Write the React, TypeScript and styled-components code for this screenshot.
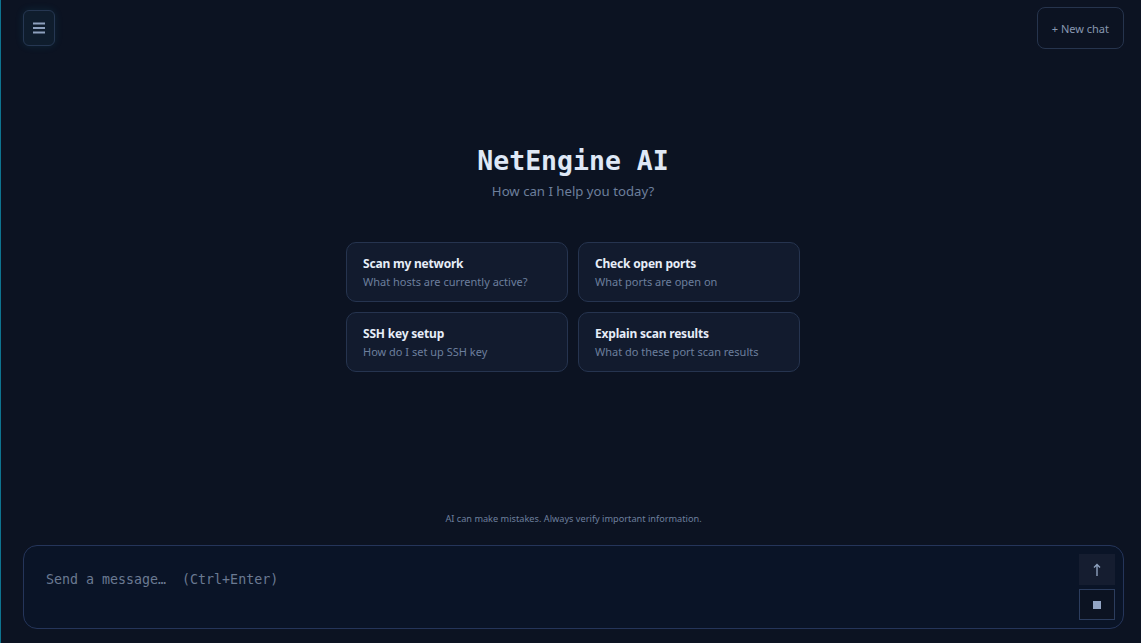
import styled, { createGlobalStyle } from 'styled-components';

const GlobalStyle = createGlobalStyle`
  html, body {
    margin: 0;
    padding: 0;
    height: 100%;
    background: #0c1322;
  }
  #root {
    height: 100%;
  }
  * {
    box-sizing: border-box;
  }
`;

const Shell = styled.div`
  height: 100vh;
  display: flex;
  flex-direction: column;
  background-color: #0c1322;
  border-left: 1px solid #0e7490;
  font-family: 'Noto Sans', 'Open Sans', sans-serif;
`;

const TopBar = styled.header`
  display: flex;
  justify-content: space-between;
  align-items: flex-start;
  padding: 7px 17px 0 22px;
`;

const MenuButton = styled.button`
  width: 32px;
  height: 36px;
  margin-top: 3px;
  display: flex;
  align-items: center;
  justify-content: center;
  background: #0f1d2d;
  border: 1px solid #263752;
  border-radius: 6px;
  box-shadow: 0 0 8px rgba(34, 170, 210, 0.12);
  cursor: pointer;
  padding: 0;
`;

const NewChatButton = styled.button`
  height: 42px;
  padding: 0 14px;
  background: transparent;
  border: 1px solid #26344d;
  border-radius: 8px;
  color: #8797b0;
  font-family: 'Noto Sans', 'Open Sans', sans-serif;
  font-size: 11px;
  cursor: pointer;
`;

const Main = styled.main`
  flex: 1;
  display: flex;
  flex-direction: column;
  align-items: center;
  padding-top: 95px;
  padding-left: 4px;
`;

const Title = styled.h1`
  margin: 0;
  font-family: 'DejaVu Sans Mono', 'Liberation Mono', monospace;
  font-size: 26.5px;
  font-weight: 700;
  color: #dfe8f6;
  line-height: 34px;
`;

const Subtitle = styled.p`
  margin: 3px 0 0;
  font-size: 13.2px;
  color: #6d7f9c;
  line-height: 20px;
`;

const Suggestions = styled.div`
  margin-top: 41px;
  display: grid;
  grid-template-columns: 222px 222px;
  gap: 10px 10px;
`;

const Card = styled.button`
  height: 60px;
  padding: 0 16px;
  display: flex;
  flex-direction: column;
  justify-content: center;
  align-items: flex-start;
  gap: 1px;
  text-align: left;
  background: #121b2e;
  border: 1px solid #26344f;
  border-radius: 10px;
  cursor: pointer;
`;

const CardTitle = styled.span`
  font-family: 'Noto Sans', 'Open Sans', sans-serif;
  font-size: 12px;
  font-weight: 700;
  letter-spacing: -0.2px;
  color: #e6edf8;
  line-height: 18px;
`;

const CardHint = styled.span`
  font-family: 'Noto Sans', 'Open Sans', sans-serif;
  font-size: 11px;
  color: #6c7f9d;
  line-height: 16px;
`;

const Footer = styled.footer`
  display: flex;
  flex-direction: column;
  align-items: center;
  padding: 0 17px 14px 22px;
`;

const Disclaimer = styled.p`
  margin: 0 0 19px;
  font-size: 9.2px;
  color: #6c7f9d;
  line-height: 14px;
`;

const Composer = styled.div`
  width: 100%;
  height: 84px;
  display: flex;
  align-items: stretch;
  background: #0a1427;
  border: 1px solid #25355a;
  border-radius: 14px;
  padding: 8px 8px 8px 22px;
`;

const Input = styled.textarea`
  flex: 1;
  resize: none;
  background: transparent;
  border: none;
  outline: none;
  padding: 0;
  margin-top: 17px;
  font-family: 'DejaVu Sans Mono', 'Liberation Mono', monospace;
  font-size: 13.3px;
  line-height: 18px;
  color: #c9d4e5;

  &::placeholder {
    color: #6a7a92;
  }
`;

const Actions = styled.div`
  display: flex;
  flex-direction: column;
  gap: 4px;
`;

const ActionButton = styled.button<{ $outlined?: boolean }>`
  width: 36px;
  height: 31px;
  display: flex;
  align-items: center;
  justify-content: center;
  padding: 0;
  background: ${(p) => (p.$outlined ? '#0c1322' : '#151d30')};
  border: 1px solid ${(p) => (p.$outlined ? '#2c3d5e' : '#151d30')};
  border-radius: 0;
  cursor: pointer;
`;

const suggestions = [
  { title: 'Scan my network', hint: 'What hosts are currently active?' },
  { title: 'Check open ports', hint: 'What ports are open on' },
  { title: 'SSH key setup', hint: 'How do I set up SSH key' },
  { title: 'Explain scan results', hint: 'What do these port scan results' },
];

const App = () => {
  return (
    <>
      <GlobalStyle />
      <Shell>
        <TopBar>
          <MenuButton aria-label="Menu">
            <svg width="12" height="12" viewBox="0 0 12 12">
              <rect x="0" y="0.5" width="12" height="2" fill="#8da0bd" />
              <rect x="0" y="5" width="12" height="2" fill="#8da0bd" />
              <rect x="0" y="9.5" width="12" height="2" fill="#8da0bd" />
            </svg>
          </MenuButton>
          <NewChatButton>+ New chat</NewChatButton>
        </TopBar>

        <Main>
          <Title>NetEngine AI</Title>
          <Subtitle>How can I help you today?</Subtitle>
          <Suggestions>
            {suggestions.map((s) => (
              <Card key={s.title}>
                <CardTitle>{s.title}</CardTitle>
                <CardHint>{s.hint}</CardHint>
              </Card>
            ))}
          </Suggestions>
        </Main>

        <Footer>
          <Disclaimer>AI can make mistakes. Always verify important information.</Disclaimer>
          <Composer>
            <Input placeholder="Send a message…  (Ctrl+Enter)" />
            <Actions>
              <ActionButton aria-label="Send">
                <svg width="8" height="14" viewBox="0 0 8 14">
                  <path d="M4 13V1.5M1 4.5L4 1.5L7 4.5" stroke="#8da0bd" strokeWidth="1.4" fill="none" />
                </svg>
              </ActionButton>
              <ActionButton $outlined aria-label="Stop">
                <svg width="8" height="8" viewBox="0 0 8 8">
                  <rect width="8" height="8" fill="#93a5c4" />
                </svg>
              </ActionButton>
            </Actions>
          </Composer>
        </Footer>
      </Shell>
    </>
  );
};

export default App;
